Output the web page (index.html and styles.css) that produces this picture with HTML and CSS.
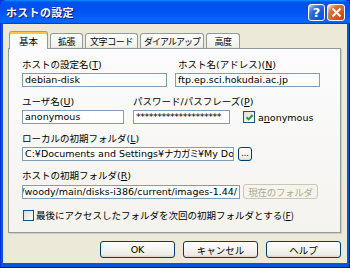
FILE: index.html
```html
<!DOCTYPE html>
<html lang="ja">
<head>
    <meta charset="utf-8">
    <title>ホストの設定</title>
    <link rel="stylesheet" href="styles.css">
</head>
<body>
<div class="window">
    <div class="titlebar">
        <span class="title">ホストの設定</span>
        <div class="caption-btns">
            <span class="cap cap-help">?</span>
            <span class="cap cap-close">
                <svg width="11" height="11" viewBox="0 0 11 11"><path d="M1.5 1.5 L9.5 9.5 M9.5 1.5 L1.5 9.5" stroke="#fff" stroke-width="2"/></svg>
            </span>
        </div>
    </div>

    <div class="client">
        <div class="tabs">
            <div class="tab active tab-basic">基本</div>
            <div class="tab tab-ext">拡張</div>
            <div class="tab tab-code">文字コード</div>
            <div class="tab tab-dial">ダイアルアップ</div>
            <div class="tab tab-adv">高度</div>
        </div>

        <div class="panel">
            <div class="row">
                <div class="field w-name">
                    <label>ホストの設定名(<u>T</u>)</label>
                    <div class="input">debian-disk</div>
                </div>
                <div class="field w-host">
                    <label class="indent">ホスト名(アドレス)(<u>N</u>)</label>
                    <div class="input">ftp.ep.sci.hokudai.ac.jp</div>
                </div>
            </div>

            <div class="row row-user">
                <div class="field w-user">
                    <label>ユーザ名(<u>U</u>)</label>
                    <div class="input">anonymous</div>
                </div>
                <div class="field w-pass">
                    <label>パスワード/パスフレーズ(<u>P</u>)</label>
                    <div class="input input-pass">********************</div>
                </div>
                <div class="check-inline">
                    <span class="checkbox checked">
                        <svg width="9" height="9" viewBox="0 0 9 9"><path d="M1.5 4.2 L3.6 6.4 L7.6 2" fill="none" stroke="#21a121" stroke-width="2"/></svg>
                    </span>
                    <span>a<u>n</u>onymous</span>
                </div>
            </div>

            <div class="field">
                <label>ローカルの初期フォルダ(<u>L</u>)</label>
                <div class="input-line">
                    <div class="input w-local">C:¥Documents and Settings¥<span class="kana">ナカガミ</span>¥My Docu</div>
                    <button class="btn btn-browse">...</button>
                </div>
            </div>

            <div class="field">
                <label>ホストの初期フォルダ(<u>R</u>)</label>
                <div class="input-line">
                    <div class="input input-end w-remote"><span>/debian/dists/woody/main/disks-i386/current/images-1.44/</span></div>
                    <button class="btn btn-current" disabled>現在のフォルダ</button>
                </div>
            </div>

            <div class="check-row">
                <span class="checkbox"></span>
                <span>最後にアクセスしたフォルダを次回の初期フォルダとする(<u>F</u>)</span>
            </div>
        </div>

        <div class="buttons">
            <button class="btn btn-dlg">OK</button>
            <button class="btn btn-dlg">キャンセル</button>
            <button class="btn btn-dlg">ヘルプ</button>
        </div>
    </div>
</div>
</body>
</html>
```

FILE: styles.css
```css
body {
    margin: 0;
    font-family: "DejaVu Sans", "Noto Sans CJK JP", sans-serif;
    font-size: 9.5px;
    color: #000;
}

.window {
    width: 350px;
    height: 268px;
    display: flex;
    flex-direction: column;
    background: #0855dd;
    box-shadow: inset -1px -1px #00138c, inset 1px 1px #0831d9;
    overflow: hidden;
}

/* title bar */
.titlebar {
    height: 24px;
    flex: none;
    display: flex;
    align-items: center;
    justify-content: space-between;
    padding: 0 5px 0 6px;
    background: linear-gradient(to bottom, #0997ff, #0053ee 8%, #0050ee 40%, #0066ff 88%, #0066ff 93%, #005bff 95%, #003dd7 96%, #003dd7);
    border-radius: 6px 6px 0 0;
}
.title {
    color: #fff;
    font-family: "Noto Sans CJK JP", sans-serif;
    font-weight: bold;
    font-size: 11px;
    text-shadow: 1px 1px #0f1089;
    letter-spacing: 0.3px;
}
.caption-btns {
    display: flex;
    gap: 2px;
}
.cap {
    width: 17px;
    height: 17px;
    box-sizing: border-box;
    border: 1px solid #fff;
    border-radius: 3px;
    display: flex;
    align-items: center;
    justify-content: center;
}
.cap-help {
    background: radial-gradient(circle at 90% 90%, #0054e9 0%, #2263d5 55%, #4479e4 70%, #a3bbec 90%, #fff 100%);
    color: #fff;
    font-family: "DejaVu Sans", sans-serif;
    font-weight: bold;
    font-size: 13px;
}
.cap-close {
    width: 18px;
    background: radial-gradient(circle at 90% 90%, #cc4600 0%, #dc6527 55%, #cd7546 70%, #ffccb2 90%, #fff 100%);
}

/* client area */
.client {
    flex: 1;
    margin: 0 3px 5px 3px;
    padding: 7px 6px 0 5px;
    background: #ece9d8;
    display: flex;
    flex-direction: column;
}

.tabs {
    display: flex;
    align-items: flex-end;
    gap: 2px;
    height: 17px;
    padding-left: 1px;
    position: relative;
    z-index: 1;
}
.tab {
    height: 15px;
    box-sizing: border-box;
    border: 1px solid #919b9c;
    border-bottom: none;
    border-radius: 3px 3px 0 0;
    background: linear-gradient(to bottom, #fff, #fafaf9 26%, #f0f0ea 95%, #d6d0c5);
    display: flex;
    align-items: center;
    justify-content: center;
    white-space: nowrap;
    font-size: 9px;
    letter-spacing: -0.4px;
}
.tab.active {
    height: 18px;
    margin-bottom: -1px;
    background: #fcfcfe;
    border-top: 1px solid #e68b2c;
    box-shadow: inset 0 2px #ffc73c;
    padding-top: 1px;
    font-size: 9.5px;
    letter-spacing: 0;
}
.tab-basic { width: 39px; }
.tab-ext { width: 33px; }
.tab-code { width: 53px; }
.tab-dial { width: 64px; letter-spacing: -1px; }
.tab-adv { width: 34px; }

.panel {
    height: 185px;
    box-sizing: border-box;
    border: 1px solid #919b9c;
    background: linear-gradient(to bottom, #fcfcfe, #f4f3ee);
    padding: 10px 0 0 13px;
    box-shadow: 1px 1px #d0cebf;
}

.row {
    display: flex;
    gap: 8px;
}
.row-user {
    gap: 9px;
}

.field {
    display: flex;
    flex-direction: column;
    margin-bottom: 9px;
}
.field label {
    height: 12px;
    line-height: 12px;
    margin-bottom: 2px;
    white-space: nowrap;
}
.field label.indent {
    padding-left: 3px;
}

.input {
    height: 14px;
    box-sizing: border-box;
    border: 1px solid #7f9db9;
    background: #fff;
    padding: 0 2px;
    line-height: 12px;
    white-space: nowrap;
    overflow: hidden;
}
.input-pass {
    letter-spacing: -0.5px;
}
.input-end {
    display: flex;
    justify-content: flex-end;
    padding-right: 2px;
}
.kana {
    letter-spacing: -1px;
}

.w-name { width: 145px; }
.w-host { width: 145px; }
.w-user { width: 102px; }
.w-pass { width: 97px; }
.w-local { width: 212px; }
.w-remote { width: 218px; }

.input-line {
    display: flex;
    align-items: center;
    gap: 4px;
}
.input-line .w-remote + .btn {
    margin-left: -1px;
}

.check-inline {
    display: flex;
    align-items: center;
    gap: 3px;
    align-self: flex-start;
    margin-top: 14px;
    height: 14px;
    margin-left: 4px;
}

.checkbox {
    width: 12px;
    height: 12px;
    box-sizing: border-box;
    border: 1px solid #1c5180;
    background: linear-gradient(135deg, #dcdcd7, #fff);
    display: flex;
    align-items: center;
    justify-content: center;
    flex: none;
}

.check-row {
    display: flex;
    align-items: center;
    gap: 2px;
    margin-top: 5px;
    margin-left: 1px;
    font-family: "Noto Sans CJK JP", sans-serif;
}
.check-row .checkbox {
    width: 11px;
    height: 11px;
}

/* buttons */
.btn {
    font-family: inherit;
    font-size: 9.5px;
    color: #000;
    padding: 0;
    box-sizing: border-box;
    border: 1px solid #003c74;
    border-radius: 3px;
    background: linear-gradient(to bottom, #fff, #ecebe6 86%, #d6d0c5);
}
.btn-browse {
    width: 14px;
    height: 14px;
    line-height: 8px;
    font-size: 8px;
}
.btn-current {
    width: 75px;
    height: 15px;
    color: #aca899;
    border-color: #c9c7ba;
    background: #f5f4ea;
    letter-spacing: -0.3px;
}

.buttons {
    display: flex;
    justify-content: flex-end;
    gap: 8px;
    margin-top: 8px;
}
.btn-dlg {
    width: 75px;
    height: 17px;
}
```
